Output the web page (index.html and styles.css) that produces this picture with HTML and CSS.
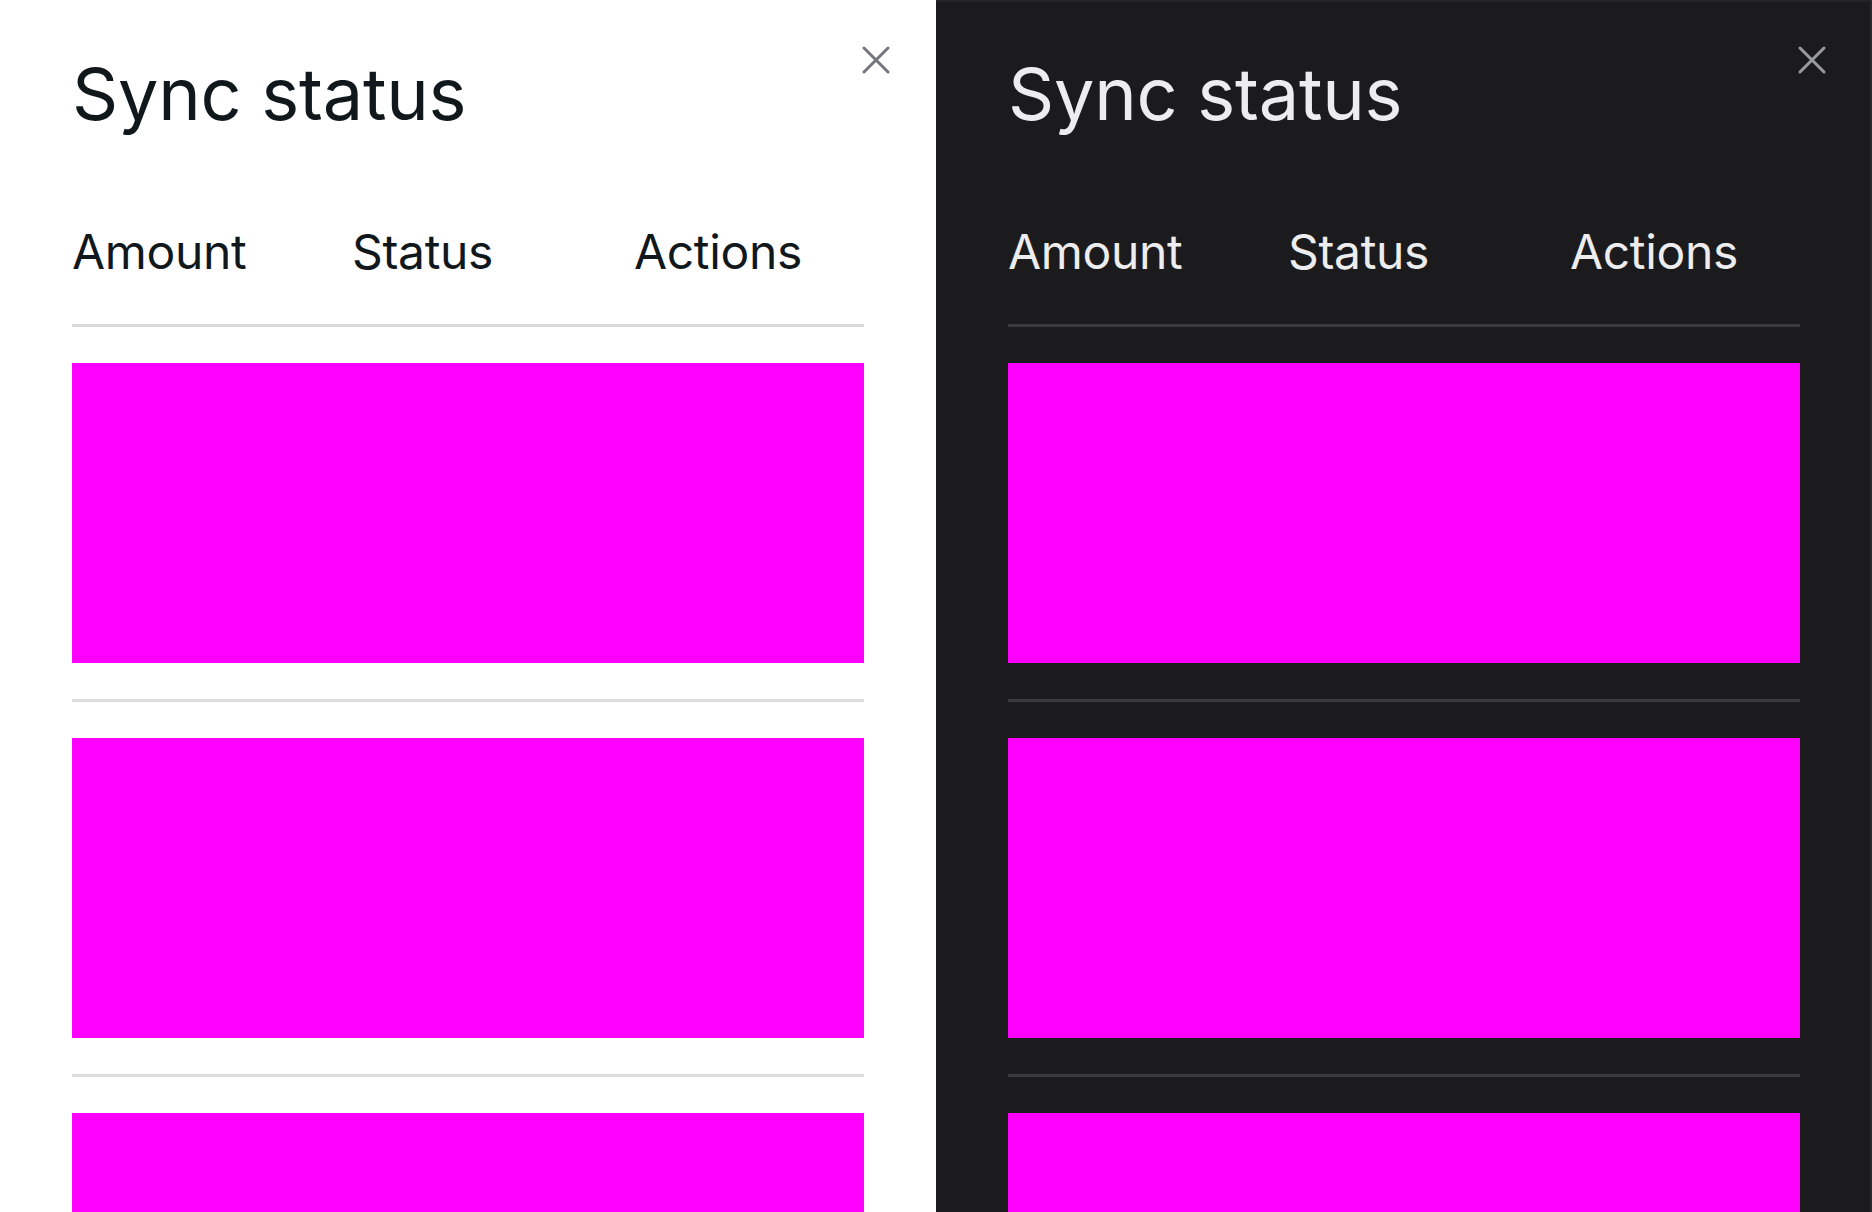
FILE: index.html
```html
<!DOCTYPE html>
<html lang="en">
<head>
<meta charset="utf-8">
<title>Sync status</title>
<link rel="stylesheet" href="styles.css">
</head>
<body>
<div class="stage">
  <section class="panel panel-light">
    <button class="close" aria-label="Close">
      <svg viewBox="0 0 28 28" width="28" height="28"><path d="M2 2L26 26M26 2L2 26" /></svg>
    </button>
    <h1 class="title">Sync status</h1>
    <div class="table">
      <div class="head">
        <div class="th">Amount</div>
        <div class="th">Status</div>
        <div class="th">Actions</div>
      </div>
      <div class="row"><div class="cell-fill"></div></div>
      <div class="row"><div class="cell-fill"></div></div>
      <div class="row"><div class="cell-fill"></div></div>
    </div>
  </section>
  <section class="panel panel-dark">
    <button class="close" aria-label="Close">
      <svg viewBox="0 0 28 28" width="28" height="28"><path d="M2 2L26 26M26 2L2 26" /></svg>
    </button>
    <h1 class="title">Sync status</h1>
    <div class="table">
      <div class="head">
        <div class="th">Amount</div>
        <div class="th">Status</div>
        <div class="th">Actions</div>
      </div>
      <div class="row"><div class="cell-fill"></div></div>
      <div class="row"><div class="cell-fill"></div></div>
      <div class="row"><div class="cell-fill"></div></div>
    </div>
  </section>
</div>
</body>
</html>
```

FILE: styles.css
```css
* { box-sizing: border-box; }
html, body {
  margin: 0;
  padding: 0;
  width: 1872px;
  height: 1212px;
  overflow: hidden;
  font-family: Inter, "Noto Sans", "Liberation Sans", sans-serif;
}
.stage {
  display: grid;
  grid-template-columns: 936px 936px;
  height: 1212px;
}
.panel {
  position: relative;
  padding: 51px 72px 0;
  overflow: hidden;
}
.panel-light { background: #ffffff; color: #11181c; }
.panel-dark {
  background: #1b1b1d;
  color: #ededef;
  box-shadow: inset 0 3px 3px -2px #2e2e31, inset -2px 0 0 #2a2a2d;
}
.close {
  position: absolute;
  top: 46px;
  right: 46px;
  width: 28px;
  height: 28px;
  padding: 0;
  border: 0;
  background: none;
  display: block;
}
.close svg { display: block; }
.close path {
  fill: none;
  stroke-width: 3;
  stroke-linecap: round;
}
.panel-light .close path { stroke: #74747c; }
.panel-dark .close path { stroke: #9a9aa1; }
.title {
  margin: 0;
  font-size: 72px;
  font-weight: 400;
  line-height: 86px;
  letter-spacing: -0.25px;
}
.table { margin-top: 86px; }
.head {
  display: grid;
  grid-template-columns: 280px 282px 1fr;
  font-size: 48px;
  line-height: 58px;
  letter-spacing: -0.35px;
  padding-bottom: 43px;
  border-bottom: 3px solid;
}
.panel-light .head, .panel-light .row + .row { border-color: #dbdbdd; }
.panel-dark .head, .panel-dark .row + .row { border-color: #3b3b3e; }
.row { padding-top: 36px; padding-bottom: 36px; }
.row + .row { border-top: 3px solid; }
.cell-fill {
  height: 300px;
  background: #ff00ff;
}
```
